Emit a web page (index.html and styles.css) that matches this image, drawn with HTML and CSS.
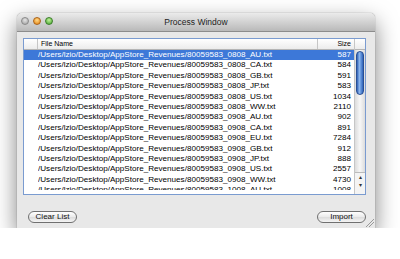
FILE: index.html
```html
<!DOCTYPE html>
<html lang="en">
<head>
    <meta charset="UTF-8">
    <title>Process Window</title>
    <link rel="stylesheet" href="styles.css">
</head>
<body>
    <div class="window">
        <div class="titlebar">
            <div class="lights">
                <span class="light light-close"></span>
                <span class="light light-min"></span>
                <span class="light light-max"></span>
            </div>
            <div class="title">Process Window</div>
        </div>
        <div class="content">
            <div class="list">
                <div class="list-main">
                    <div class="list-head">
                        <div class="col-blank"></div>
                        <div class="col-name">File Name</div>
                        <div class="col-size">Size</div>
                    </div>
                    <div class="rows">
                        <div class="row selected"><span class="cell-blank"></span><span class="cell-name">/Users/lzio/Desktop/AppStore_Revenues/80059583_0808_AU.txt</span><span class="cell-size">587</span></div>
                        <div class="row"><span class="cell-blank"></span><span class="cell-name">/Users/lzio/Desktop/AppStore_Revenues/80059583_0808_CA.txt</span><span class="cell-size">584</span></div>
                        <div class="row"><span class="cell-blank"></span><span class="cell-name">/Users/lzio/Desktop/AppStore_Revenues/80059583_0808_GB.txt</span><span class="cell-size">591</span></div>
                        <div class="row"><span class="cell-blank"></span><span class="cell-name">/Users/lzio/Desktop/AppStore_Revenues/80059583_0808_JP.txt</span><span class="cell-size">583</span></div>
                        <div class="row"><span class="cell-blank"></span><span class="cell-name">/Users/lzio/Desktop/AppStore_Revenues/80059583_0808_US.txt</span><span class="cell-size">1034</span></div>
                        <div class="row"><span class="cell-blank"></span><span class="cell-name">/Users/lzio/Desktop/AppStore_Revenues/80059583_0808_WW.txt</span><span class="cell-size">2110</span></div>
                        <div class="row"><span class="cell-blank"></span><span class="cell-name">/Users/lzio/Desktop/AppStore_Revenues/80059583_0908_AU.txt</span><span class="cell-size">902</span></div>
                        <div class="row"><span class="cell-blank"></span><span class="cell-name">/Users/lzio/Desktop/AppStore_Revenues/80059583_0908_CA.txt</span><span class="cell-size">891</span></div>
                        <div class="row"><span class="cell-blank"></span><span class="cell-name">/Users/lzio/Desktop/AppStore_Revenues/80059583_0908_EU.txt</span><span class="cell-size">7284</span></div>
                        <div class="row"><span class="cell-blank"></span><span class="cell-name">/Users/lzio/Desktop/AppStore_Revenues/80059583_0908_GB.txt</span><span class="cell-size">912</span></div>
                        <div class="row"><span class="cell-blank"></span><span class="cell-name">/Users/lzio/Desktop/AppStore_Revenues/80059583_0908_JP.txt</span><span class="cell-size">888</span></div>
                        <div class="row"><span class="cell-blank"></span><span class="cell-name">/Users/lzio/Desktop/AppStore_Revenues/80059583_0908_US.txt</span><span class="cell-size">2557</span></div>
                        <div class="row"><span class="cell-blank"></span><span class="cell-name">/Users/lzio/Desktop/AppStore_Revenues/80059583_0908_WW.txt</span><span class="cell-size">4730</span></div>
                        <div class="row"><span class="cell-blank"></span><span class="cell-name">/Users/lzio/Desktop/AppStore_Revenues/80059583_1008_AU.txt</span><span class="cell-size">1008</span></div>
                    </div>
                </div>
                <div class="scrollbar">
                    <div class="scroll-head"></div>
                    <div class="scroll-track">
                        <div class="scroll-thumb"></div>
                    </div>
                    <div class="scroll-arrows">
                        <span class="arrow">&#9652;</span>
                        <span class="arrow">&#9662;</span>
                    </div>
                </div>
            </div>
        </div>
        <div class="footer">
            <button class="btn">Clear List</button>
            <button class="btn">Import</button>
        </div>
        <div class="grip"></div>
    </div>
</body>
</html>
```

FILE: styles.css
```css
body {
    margin: 0;
    background: #fff;
    font-family: "Liberation Sans", Arial, sans-serif;
    color: #000;
}

.window {
    position: relative;
    margin: 13px 0 0 17px;
    width: 358px;
    height: 215px;
    background: #e8e8e8;
    border-radius: 5px 5px 0 0;
    box-shadow: 0 9px 22px rgba(0, 0, 0, 0.5), 0 0 1px rgba(0, 0, 0, 0.6);
    display: flex;
    flex-direction: column;
}

.titlebar {
    position: relative;
    height: 18px;
    background: linear-gradient(#ebebeb, #d2d2d2 50%, #b9b9b9);
    border-bottom: 1px solid #8c8c8c;
    border-radius: 5px 5px 0 0;
    display: flex;
    align-items: center;
    justify-content: center;
}

.lights {
    position: absolute;
    left: 4px;
    top: 4px;
    display: flex;
    gap: 4px;
}

.light {
    width: 8px;
    height: 8px;
    border-radius: 50%;
    box-sizing: border-box;
}

.light-close {
    background: radial-gradient(circle at 50% 35%, #e4e4e4, #9d9d9d);
    border: 1px solid #8a8a8a;
}

.light-min {
    background: radial-gradient(circle at 50% 35%, #ffd98a, #e5800a);
    border: 1px solid #a9631a;
}

.light-max {
    background: radial-gradient(circle at 50% 35%, #c2f29a, #3fa32b);
    border: 1px solid #3d7e2b;
}

.title {
    font-size: 8.5px;
    color: #222;
}

.content {
    padding: 6px 9px 0 6px;
}

.list {
    display: flex;
    height: 155px;
    border: 1px solid #7a9bd0;
    background: #fff;
    overflow: hidden;
}

.list-main {
    flex: 1;
    overflow: hidden;
}

.list-head {
    display: flex;
    height: 10px;
    font-size: 7px;
    line-height: 10px;
    background: linear-gradient(#fff, #ececec);
    border-bottom: 1px solid #b5b5b5;
}

.col-blank {
    width: 13px;
    border-right: 1px solid #c6c6c6;
}

.col-name {
    width: 276px;
    padding-left: 3px;
    border-right: 1px solid #c6c6c6;
}

.col-size {
    flex: 1;
    text-align: right;
    padding-right: 3px;
}

.rows {
    height: 140px;
    overflow: hidden;
}

.row {
    display: flex;
    height: 10.4px;
    line-height: 10.4px;
    font-size: 8.1px;
    white-space: nowrap;
}

.row.selected {
    background: #3d78d8;
    color: #fff;
}

.cell-blank {
    width: 14px;
}

.cell-name {
    width: 280px;
    overflow: hidden;
}

.cell-size {
    flex: 1;
    text-align: right;
    padding-right: 3px;
}

.scrollbar {
    width: 10px;
    display: flex;
    flex-direction: column;
    border-left: 1px solid #c6c6c6;
    background: #f2f2f2;
}

.scroll-head {
    height: 10px;
    background: linear-gradient(#fff, #ececec);
    border-bottom: 1px solid #b5b5b5;
}

.scroll-track {
    flex: 1;
    padding: 1px 1px 0 1px;
    background: linear-gradient(90deg, #dcdcdc, #f7f7f7 50%, #dcdcdc);
}

.scroll-thumb {
    height: 44px;
    border-radius: 4px;
    background: linear-gradient(90deg, #2e5fb4, #8fb8ee 40%, #6a9be0 60%, #2f62b8);
    border: 1px solid #294f94;
    box-sizing: border-box;
}

.scroll-arrows {
    display: flex;
    flex-direction: column;
    align-items: center;
    font-size: 6px;
    line-height: 8px;
    color: #333;
    background: #f4f4f4;
    border-top: 1px solid #bbb;
    padding-bottom: 5px;
}

.footer {
    display: flex;
    justify-content: space-between;
    padding: 16px 9px 0 11px;
}

.btn {
    width: 49px;
    height: 12px;
    padding: 0;
    font-family: "Liberation Sans", Arial, sans-serif;
    font-size: 8px;
    line-height: 10px;
    color: #111;
    border: 1px solid #707070;
    border-radius: 6px;
    background: linear-gradient(#ffffff, #eaeaea 50%, #dcdcdc 51%, #f4f4f4);
}

.grip {
    position: absolute;
    right: 1px;
    bottom: 1px;
    width: 8px;
    height: 8px;
    background: linear-gradient(135deg, transparent 50%, #999 50%, #999 55%, transparent 55%, transparent 68%, #999 68%, #999 73%, transparent 73%);
}
```
